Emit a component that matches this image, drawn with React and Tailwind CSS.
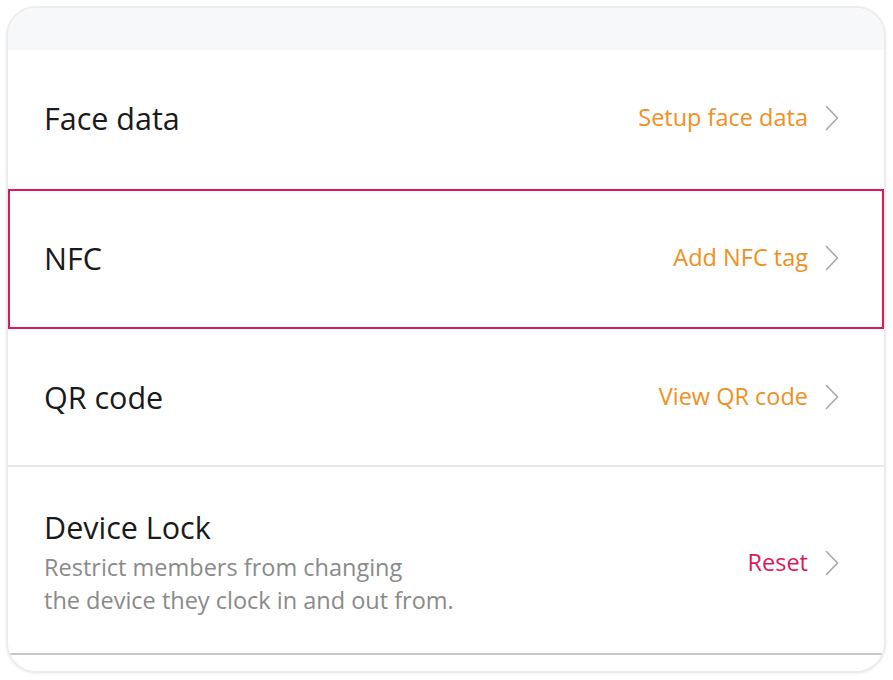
import React from 'react';

const Chevron = () => (
  <svg width="16" height="26" viewBox="0 0 16 26" fill="none" className="shrink-0">
    <path d="M2.5 1.5 L13.5 13 L2.5 24.5" stroke="#a8a8a8" strokeWidth="1.6" strokeLinecap="round" strokeLinejoin="round" />
  </svg>
);

const Row = ({ title, action, actionClass, boxed, divider, children }) => (
  <div
    className={
      'flex items-center justify-between ' +
      (boxed ? 'border-[2.5px] border-[#dc1a5a] pl-[34px] pr-[42px] ' : 'pl-[36px] pr-[44px] ') +
      (divider || '')
    }
  >
    <div className="flex flex-col">
      <div className="text-[30.5px] leading-[38px] text-[#1a1a1a]">{title}</div>
      {children}
    </div>
    <div className="flex items-center gap-[16px]">
      <span className={'text-[23.5px] ' + actionClass}>{action}</span>
      <Chevron />
    </div>
  </div>
);

export default function App() {
  return (
    <div className="bg-white w-[893px] h-[680px] pt-[6px] pl-[6px]" style={{ fontFamily: '"Open Sans", Lato, sans-serif' }}>
      <div className="w-[880px] h-[667px] rounded-[30px] border-2 border-[#ececec] overflow-hidden flex flex-col bg-white shadow-[0_1px_3px_rgba(0,0,0,0.06)]">
        {/* top strip */}
        <div className="h-[42px] bg-[#f7f8fa]" />

        <div className="h-[139px] flex flex-col justify-center pb-[3px]">
          <Row title="Face data" action="Setup face data" actionClass="text-[#f0901e]" />
        </div>

        <Row title="NFC" action="Add NFC tag" actionClass="text-[#f0901e]" boxed divider="h-[140px] pb-[2px]" />

        <div className="h-[138px] flex flex-col justify-center border-b-2 border-[#e6e6e6]">
          <Row title="QR code" action="View QR code" actionClass="text-[#f0901e]" />
        </div>

        <div className="h-[188px] flex flex-col justify-center pt-[5px] border-b-2 border-[#c8c8c8]">
          <Row title="Device Lock" action="Reset" actionClass="text-[#dc1a5a]">
            <div className="mt-[5px] text-[23.5px] leading-[33px] text-[#8a8a8a]">
              Restrict members from changing
              <br />
              the device they clock in and out from.
            </div>
          </Row>
        </div>

        <div className="flex-1 bg-white" />
      </div>
    </div>
  );
}
